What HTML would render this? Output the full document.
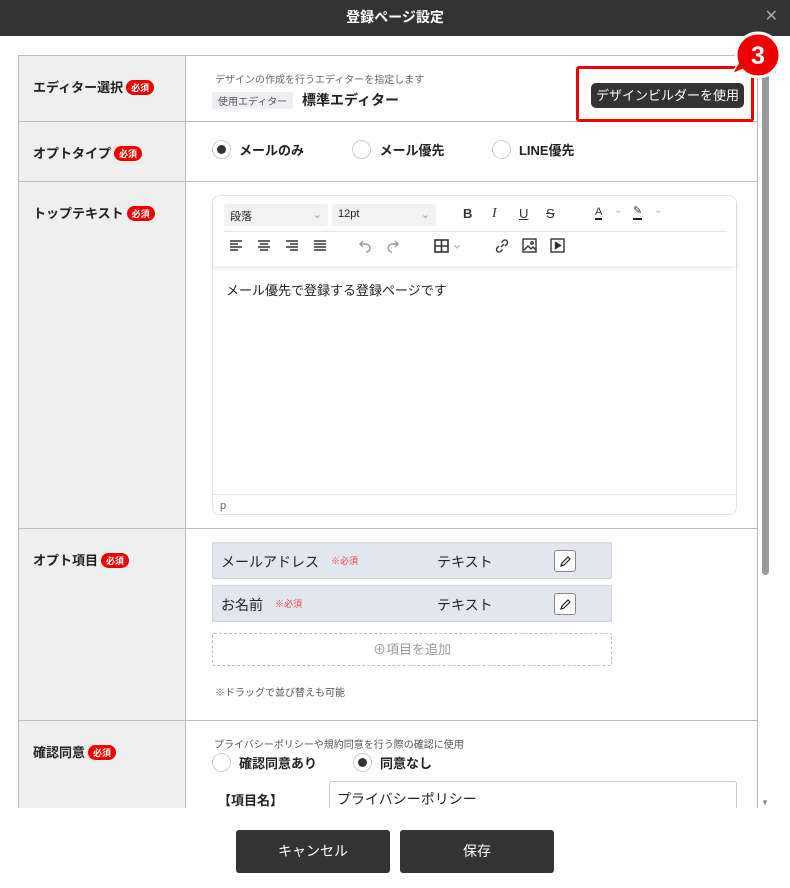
<!DOCTYPE html>
<html><head><meta charset="utf-8"><style>
*{box-sizing:border-box;margin:0;padding:0}
body{width:790px;height:888px;overflow:hidden;background:#fff;font-family:"Liberation Sans","Noto Sans CJK JP",sans-serif;color:#222;position:relative}
.hdr{position:absolute;left:0;top:0;width:790px;height:36px;background:#333;color:#fff;font-size:14px;font-weight:bold;text-align:center;line-height:34px}
.x{position:absolute;right:12px;top:0;color:#aaa;font-size:16px;font-weight:normal}
.body{position:absolute;left:0;top:36px;width:790px;height:772px;overflow:hidden}
.tbl{position:absolute;left:18px;top:19px;width:740px;border-top:1px solid #bbb;border-left:1px solid #bbb;border-right:1px solid #bbb}
.row{display:flex;border-bottom:1px solid #bbb}
.lab{width:167px;background:#efefef;border-right:1px solid #bbb;padding:21px 0 0 14px;font-size:13px;font-weight:bold}
.req{display:inline-block;background:#e00;color:#fff;font-size:9px;border-radius:8px;padding:1px 5px;margin-left:3px;vertical-align:1px}
.cnt{flex:1;position:relative}
.sb{position:absolute;left:760px;top:36px;width:10px;height:772px}
.thumb{position:absolute;left:2px;top:4px;width:7px;height:535px;background:#999;border-radius:4px}
.radio{display:inline-block;width:19px;height:19px;border:1px solid #ccc;border-radius:50%;vertical-align:middle;margin-right:8px;position:relative}
.radio.on::after{content:"";position:absolute;left:4px;top:4px;width:9px;height:9px;border-radius:50%;background:#333}
.rl{font-size:13px;font-weight:bold;vertical-align:middle}
.btn{position:absolute;top:830px;width:154px;height:43px;background:#333;color:#fff;border-radius:3px;text-align:center;line-height:43px;font-size:14px}
.item{position:absolute;left:26px;width:400px;height:37px;background:#e2e7ef;border:1px solid #ccd3dd;border-radius:2px;font-size:14px}
.item .n{position:absolute;left:8px;top:9px}
.item .r{color:#e44;font-size:9px;margin-left:12px;vertical-align:3px}
.item .t{position:absolute;left:224px;top:9px}
.item .e{position:absolute;left:341px;top:7px;width:22px;height:22px;background:#fff;border:1px solid #888;border-radius:3px}
.tb{position:absolute;font-size:13px;color:#333}
.ic{position:absolute}
</style></head><body>
<div class="hdr">登録ページ設定<span class="x">✕</span></div>
<div class="body">
<div class="tbl">
 <div class="row" style="height:66px"><div class="lab">エディター選択<span class="req">必須</span></div>
  <div class="cnt">
   <div style="position:absolute;left:29px;top:15px;font-size:10px;color:#666">デザインの作成を行うエディターを指定します</div>
   <div style="position:absolute;left:26px;top:36px;font-size:10px;color:#555;background:#eef0f3;padding:1px 6px;border-radius:2px">使用エディター</div>
   <div style="position:absolute;left:116px;top:34px;font-size:14px;font-weight:bold">標準エディター</div>
  </div></div>
 <div class="row" style="height:60px"><div class="lab">オプトタイプ<span class="req">必須</span></div>
  <div class="cnt" style="padding:18px 0 0 26px">
   <span class="radio on"></span><span class="rl">メールのみ</span>
   <span class="radio" style="margin-left:44px"></span><span class="rl">メール優先</span>
   <span class="radio" style="margin-left:43px"></span><span class="rl">LINE優先</span>
  </div></div>
 <div class="row" style="height:347px"><div class="lab">トップテキスト<span class="req">必須</span></div>
  <div class="cnt">
   <div style="position:absolute;left:26px;top:13px;width:525px;height:320px;border:1px solid #e3e3e3;border-radius:8px">
    <div style="position:absolute;left:0;top:0;width:523px;height:70px;box-shadow:0 3px 5px rgba(0,0,0,0.08);border-radius:8px 8px 0 0"></div>
    <div style="position:absolute;left:11px;top:8px;width:104px;height:22px;background:#f2f2f2;border-radius:3px;font-size:11px;padding:4px 6px">段落<span style="float:right;color:#999">⌄</span></div>
    <div style="position:absolute;left:119px;top:8px;width:104px;height:22px;background:#f2f2f2;border-radius:3px;font-size:11px;padding:4px 6px">12pt<span style="float:right;color:#999">⌄</span></div>
    <div class="tb" style="left:250px;top:10px;font-weight:bold">B</div>
    <div class="tb" style="left:279px;top:10px;font-style:italic;font-family:'Liberation Serif',serif;font-size:14px">I</div>
    <div class="tb" style="left:306px;top:10px;text-decoration:underline">U</div>
    <div class="tb" style="left:333px;top:10px;text-decoration:line-through">S</div>
    <div class="tb" style="left:382px;top:10px;font-size:11px;border-bottom:2px solid #222;line-height:12px">A</div><div class="tb" style="left:401px;top:9px;color:#aaa;font-size:10px">⌄</div>
    <div class="tb" style="left:420px;top:9px;font-size:11px;border-bottom:2px solid #222;line-height:13px">✎</div><div class="tb" style="left:441px;top:9px;color:#aaa;font-size:10px">⌄</div>
    <div style="position:absolute;left:11px;top:35px;width:503px;border-top:1px solid #e5e5e5"></div>
    <svg class="ic" style="left:16px;top:43px" width="120" height="14" stroke="#333" stroke-width="1.4">
     <path d="M1 2h12M1 5h8M1 8h12M1 11h8"/>
     <path d="M29 2h12M31 5h8M29 8h12M31 11h8"/>
     <path d="M57 2h12M61 5h8M57 8h12M61 11h8"/>
     <path d="M85 2h12M85 5h12M85 8h12M85 11h12"/>
    </svg>
    <svg class="ic" style="left:146px;top:42px" width="50" height="16" fill="none" stroke="#999" stroke-width="1.4">
     <path d="M4 3L1 6l3 3M1 6h6a4 4 0 0 1 0 8"/>
     <path d="M36 3l3 3-3 3M39 6h-6a4 4 0 0 0 0 8"/>
    </svg>
    <svg class="ic" style="left:221px;top:43px" width="30" height="14" fill="none" stroke="#333" stroke-width="1.6">
     <rect x="1" y="1" width="13" height="12"/><path d="M1 7h13M7.5 1v12"/><path d="M20 6l3 3 3-3" stroke="#aaa" stroke-width="1"/>
    </svg>
    <svg class="ic" style="left:281px;top:42px" width="16" height="16" fill="none" stroke="#333" stroke-width="1.4">
     <path d="M7 9l3-3M5 8L3 10a2.5 2.5 0 0 0 3.5 3.5L8.5 11.5M11 8l2-2A2.5 2.5 0 0 0 9.5 2.5L7.5 4.5"/>
    </svg>
    <svg class="ic" style="left:309px;top:42px" width="16" height="16" fill="none" stroke="#333" stroke-width="1.4">
     <rect x="1" y="1" width="13" height="13"/><path d="M2 12l4-4 3 3 2-2 3 3"/><circle cx="10" cy="5" r="1.2"/>
    </svg>
    <svg class="ic" style="left:337px;top:42px" width="16" height="16" fill="none" stroke="#333" stroke-width="1.4">
     <rect x="1" y="1" width="13" height="13"/><path d="M5.5 4.5v6l5-3z" fill="#333"/>
    </svg>
    <div style="position:absolute;left:13px;top:84px;font-size:13px">メール優先で登録する登録ページです</div>
    <div style="position:absolute;left:0;top:298px;width:523px;border-top:1px solid #e5e5e5;font-size:11px;color:#666;padding:5px 0 0 7px">p</div>
   </div>
  </div></div>
 <div class="row" style="height:192px"><div class="lab">オプト項目<span class="req">必須</span></div>
  <div class="cnt">
   <div class="item" style="top:13px"><span class="n">メールアドレス<span class="r">※必須</span></span><span class="t">テキスト</span><span class="e"><svg width="20" height="20" viewBox="0 0 20 20"><path d="M6 15l1-3 6-6 2 2-6 6z" fill="none" stroke="#222" stroke-width="1.2"/></svg></span></div>
   <div class="item" style="top:56px"><span class="n">お名前<span class="r">※必須</span></span><span class="t">テキスト</span><span class="e"><svg width="20" height="20" viewBox="0 0 20 20"><path d="M6 15l1-3 6-6 2 2-6 6z" fill="none" stroke="#222" stroke-width="1.2"/></svg></span></div>
   <div style="position:absolute;left:26px;top:104px;width:400px;height:33px;border:1px dashed #bbb;border-radius:2px;text-align:center;line-height:31px;font-size:13px;color:#999">⊕項目を追加</div>
   <div style="position:absolute;left:29px;top:155px;font-size:10px;color:#555">※ドラッグで並び替えも可能</div>
  </div></div>
 <div class="row" style="height:120px"><div class="lab">確認同意<span class="req">必須</span></div>
  <div class="cnt">
   <div style="position:absolute;left:28px;top:15px;font-size:10px;color:#555">プライバシーポリシーや規約同意を行う際の確認に使用</div>
   <div style="position:absolute;left:26px;top:32px"><span class="radio"></span><span class="rl">確認同意あり</span><span class="radio on" style="margin-left:36px"></span><span class="rl">同意なし</span></div>
   <div style="position:absolute;left:32px;top:69px;font-size:13px;font-weight:bold">【項目名】</div>
   <div style="position:absolute;left:143px;top:60px;width:408px;height:40px;border:1px solid #ccc;border-radius:3px;font-size:14px;padding:7px 7px">プライバシーポリシー</div>
  </div></div>
</div>
<div style="position:absolute;left:576px;top:30px;width:178px;height:56px;border:3px solid #e00;border-radius:3px"></div>
<div style="position:absolute;left:591px;top:47px;width:153px;height:25px;background:#333;color:#fff;font-size:13px;border-radius:5px;text-align:center;line-height:25px">デザインビルダーを使用</div>
</div>
<div class="sb"><div class="thumb"></div><div style="position:absolute;left:1px;top:762px;font-size:8px;color:#888">▼</div></div>
<svg style="position:absolute;left:720px;top:28px;z-index:5" width="70" height="60"><path d="M22 30 L12 46 L34 38 Z" fill="#e00" stroke="#fff" stroke-width="2"/><circle cx="38" cy="27" r="22" fill="#e00" stroke="#fff" stroke-width="3"/><path d="M22 30 L14 44 L32 37 Z" fill="#e00"/><text x="38" y="36" fill="#fff" font-size="25" font-weight="bold" text-anchor="middle" font-family="Liberation Sans">3</text></svg>
<div class="btn" style="left:236px">キャンセル</div>
<div class="btn" style="left:400px">保存</div>
</body></html>
